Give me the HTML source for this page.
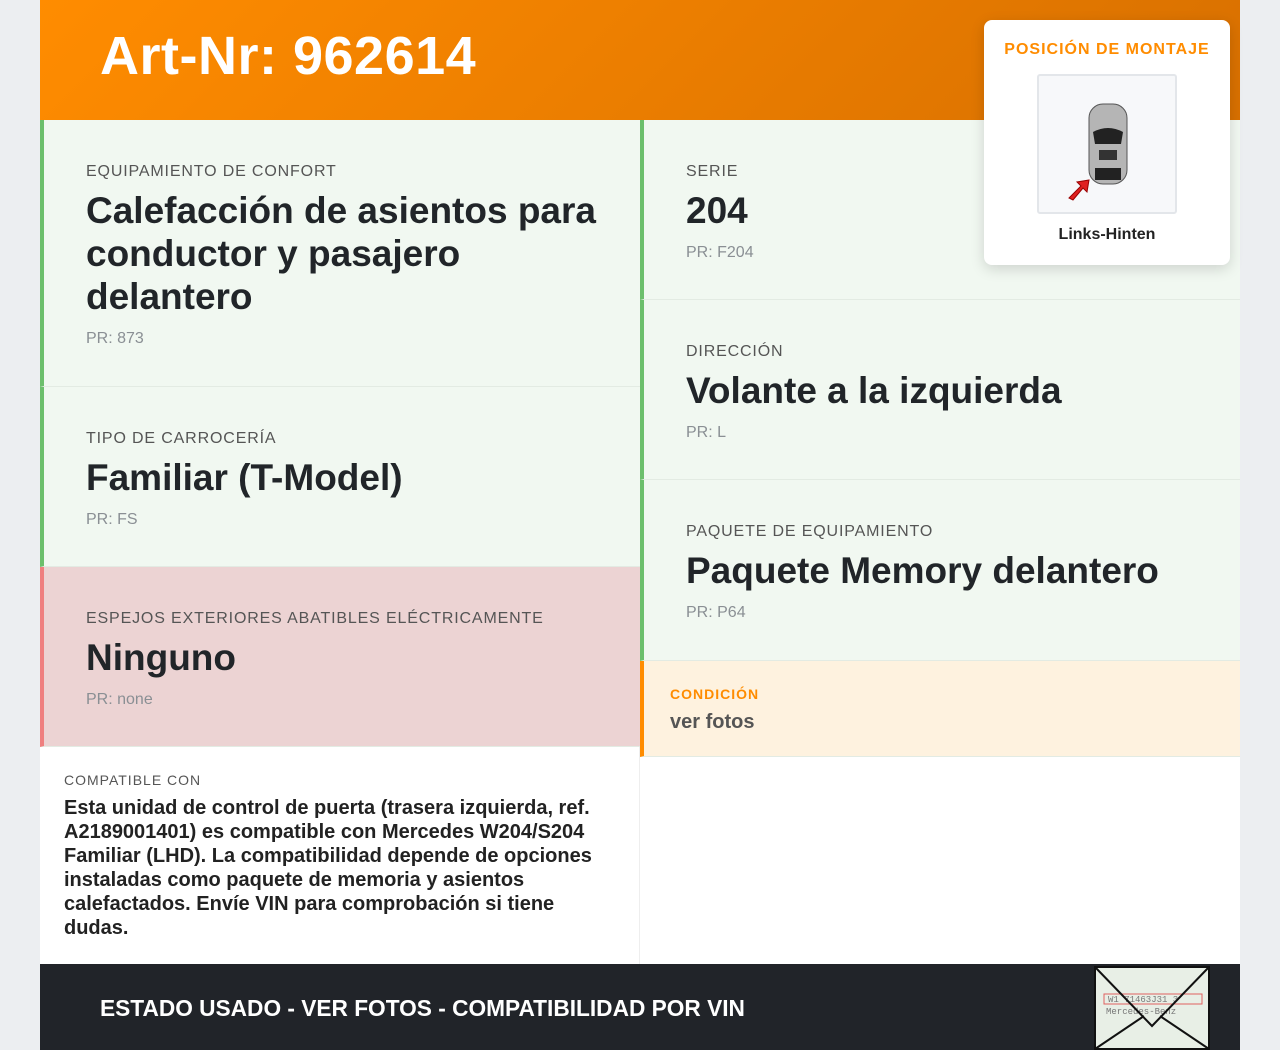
<!DOCTYPE html>
<html><head><meta charset="utf-8"><style>
*{margin:0;padding:0;box-sizing:border-box}
body{width:1280px;height:1050px;background:#eceef1;font-family:"Liberation Sans",Arial,sans-serif;overflow:hidden;position:relative}
.wrap{position:absolute;left:40px;top:0;width:1200px;height:1050px;background:#fff}
.hdr{position:absolute;left:0;top:0;width:1200px;height:120px;background:linear-gradient(135deg,#ff8c00,#d87000)}
.hdr h1{position:absolute;left:60px;top:25px;color:#fff;font-size:54px;font-weight:bold;letter-spacing:0.5px}
.card{position:absolute;width:600px;background:#f1f8f1;border-left:4px solid #6cbf6c;border-bottom:1px solid #e3ebe3;padding-left:42px}
.lbl{font-size:16px;letter-spacing:0.85px;color:#555;font-weight:500}
.val{font-size:37px;font-weight:bold;color:#212529;line-height:43px;margin-top:8px}
.pr{font-size:16px;color:#8a8f94;margin-top:12px}
.footer{position:absolute;left:0;top:964px;width:1200px;height:86px;background:#212429}
.footer span{position:absolute;left:60px;top:31px;color:#fff;font-size:22.7px;font-weight:bold}
.mont{position:absolute;left:944px;top:20px;width:246px;height:245px;background:#fff;border-radius:8px;box-shadow:0 4px 14px rgba(0,0,0,.15);text-align:center}
</style></head><body><div class="wrap">
<div class="hdr"><h1>Art-Nr: 962614</h1></div>
<div class="card" style="left:0;top:120px;height:267px;padding-top:43px"><div class="lbl">EQUIPAMIENTO DE CONFORT</div><div class="val" style="width:540px">Calefacción de asientos para conductor y pasajero delantero</div><div class="pr">PR: 873</div></div>
<div class="card" style="left:0;top:387px;height:180px;padding-top:43px"><div class="lbl">TIPO DE CARROCERÍA</div><div class="val">Familiar (T-Model)</div><div class="pr">PR: FS</div></div>
<div class="card" style="left:0;top:567px;height:180px;padding-top:43px;background:#ecd3d3;border-left-color:#ef7f7f"><div class="lbl">ESPEJOS EXTERIORES ABATIBLES ELÉCTRICAMENTE</div><div class="val">Ninguno</div><div class="pr">PR: none</div></div>
<div style="position:absolute;left:0;top:747px;width:600px;height:217px;border-right:1px solid #eee;padding:25px 24px"><div style="font-size:14px;letter-spacing:1px;color:#555">COMPATIBLE CON</div><div style="font-size:20px;font-weight:bold;color:#222;line-height:24px;margin-top:8px">Esta unidad de control de puerta (trasera izquierda, ref. A2189001401) es compatible con Mercedes W204/S204 Familiar (LHD). La compatibilidad depende de opciones instaladas como paquete de memoria y asientos calefactados. Envíe VIN para comprobación si tiene dudas.</div></div>
<div class="card" style="left:600px;top:120px;height:180px;padding-top:43px"><div class="lbl">SERIE</div><div class="val">204</div><div class="pr">PR: F204</div></div>
<div class="card" style="left:600px;top:300px;height:180px;padding-top:43px"><div class="lbl">DIRECCIÓN</div><div class="val">Volante a la izquierda</div><div class="pr">PR: L</div></div>
<div class="card" style="left:600px;top:480px;height:181px;padding-top:43px"><div class="lbl">PAQUETE DE EQUIPAMIENTO</div><div class="val">Paquete Memory delantero</div><div class="pr">PR: P64</div></div>
<div class="card" style="left:600px;top:661px;height:96px;padding-left:26px;padding-top:25px;background:#fef2df;border-left-color:#ff8c00"><div style="font-size:14px;letter-spacing:1px;color:#ff8c00;font-weight:bold">CONDICIÓN</div><div style="font-size:20px;color:#555;font-weight:bold;margin-top:9px">ver fotos</div></div>
<div class="footer"><span>ESTADO USADO - VER FOTOS - COMPATIBILIDAD POR VIN</span>
<svg style="position:absolute;left:1054px;top:2px" width="116" height="84"><rect x="1" y="1" width="114" height="82" fill="#e8efe6" stroke="#111" stroke-width="2"/><rect x="10" y="28" width="98" height="10" fill="none" stroke="#e06060"/><text x="14" y="36" font-size="9" fill="#777" font-family="Liberation Mono">W1 71463J31 3</text><text x="12" y="48" font-size="9" fill="#777" font-family="Liberation Mono">Mercedes-Benz</text><path d="M1 1 L58 60 L115 1 M1 83 L50 50 M115 83 L66 50" stroke="#111" stroke-width="2" fill="none"/></svg></div>
<div class="mont"><div style="color:#ff8c00;font-weight:bold;font-size:16px;letter-spacing:1px;margin-top:21px">POSICIÓN DE MONTAJE</div>
<div style="margin:15px auto 0;width:140px;height:140px;background:#f7f8fa;border:2px solid #e3e6ea;border-radius:3px;position:relative">
<svg width="140" height="140" style="position:absolute;left:-2px;top:-2px"><rect x="52" y="30" width="38" height="80" rx="14" fill="#b5b5b5" stroke="#555"/><path d="M56 58 Q71 50 86 58 L84 70 L58 70 Z" fill="#222"/><rect x="62" y="76" width="18" height="10" fill="#333"/><rect x="58" y="94" width="26" height="12" fill="#222"/><path d="M32 124 L44 112 L40 108 L52 106 L50 118 L46 114 L36 126 Z" fill="#e02020" stroke="#900"/></svg></div>
<div style="font-size:16px;font-weight:bold;color:#222;margin-top:12px">Links-Hinten</div></div>
</div></body></html>
